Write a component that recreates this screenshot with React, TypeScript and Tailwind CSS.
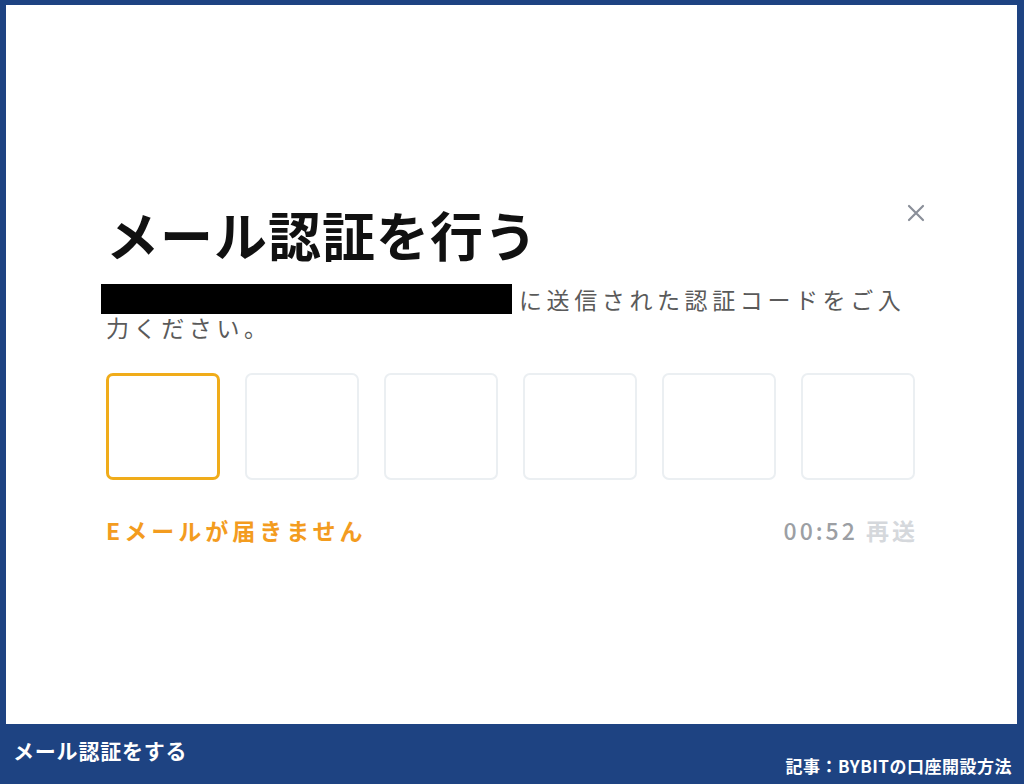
import React from "react";

const font = { fontFamily: '"Noto Sans CJK JP", "Noto Sans", sans-serif' };

export default function App() {
  return (
    <div className="w-[1024px] h-[784px] bg-[#1e4382] flex flex-col" style={font}>
      <div className="mt-[5px] ml-[6px] mr-[7px] h-[719px] bg-white flex flex-col pl-[100px] pr-[97px] pt-[196px]">
        <div className="flex justify-between items-start">
          <h1 className="text-[53px] leading-[66px] font-bold text-[#111] tracking-[1px]">メール認証を行う</h1>
          <svg width="18" height="18" viewBox="0 0 18 18" className="mt-[3px] mr-[-5px]">
            <path d="M2 2 L16 16 M16 2 L2 16" stroke="#8a8f99" strokeWidth="2.2" strokeLinecap="round" />
          </svg>
        </div>
        <div className="text-[23px] leading-[26px] text-[#5a5a5a] tracking-[4.6px] mt-[17px]">
          <div className="flex items-center">
            <span className="inline-block w-[411px] h-[30px] bg-black mr-[7px] ml-[-5px]"></span>
            <span>に送信された認証コードをご入</span>
          </div>
          <div>力ください。</div>
        </div>
        <div className="flex gap-[25px] mt-[33px]">
          <div className="w-[114px] h-[107px] rounded-[7px] border-[3px] border-[#f0ac1a]"></div>
          <div className="w-[114px] h-[107px] rounded-[7px] border-2 border-[#ebeff2]"></div>
          <div className="w-[114px] h-[107px] rounded-[7px] border-2 border-[#ebeff2]"></div>
          <div className="w-[114px] h-[107px] rounded-[7px] border-2 border-[#ebeff2]"></div>
          <div className="w-[114px] h-[107px] rounded-[7px] border-2 border-[#ebeff2]"></div>
          <div className="w-[114px] h-[107px] rounded-[7px] border-2 border-[#ebeff2]"></div>
        </div>
        <div className="flex justify-between items-center w-[809px] mt-[33px]">
          <span className="text-[23px] font-bold text-[#f39c1f] tracking-[4px]">Eメールが届きません</span>
          <span className="text-[23px] font-medium tracking-[3px] mr-[-3px]">
            <span className="text-[#9c9fa4]">00:52</span>{" "}
            <span className="text-[#d5d8dc] font-bold">再送</span>
          </span>
        </div>
      </div>
      <div className="flex-1 flex justify-between pl-[13px] pr-[12px]">
        <span className="text-white font-bold text-[21px] leading-[26px] mt-[13px] tracking-[0.8px]">メール認証をする</span>
        <span className="text-white font-bold text-[17px] leading-[20px] self-end mb-[8px] tracking-[0.5px]">記事：BYBITの口座開設方法</span>
      </div>
    </div>
  );
}
